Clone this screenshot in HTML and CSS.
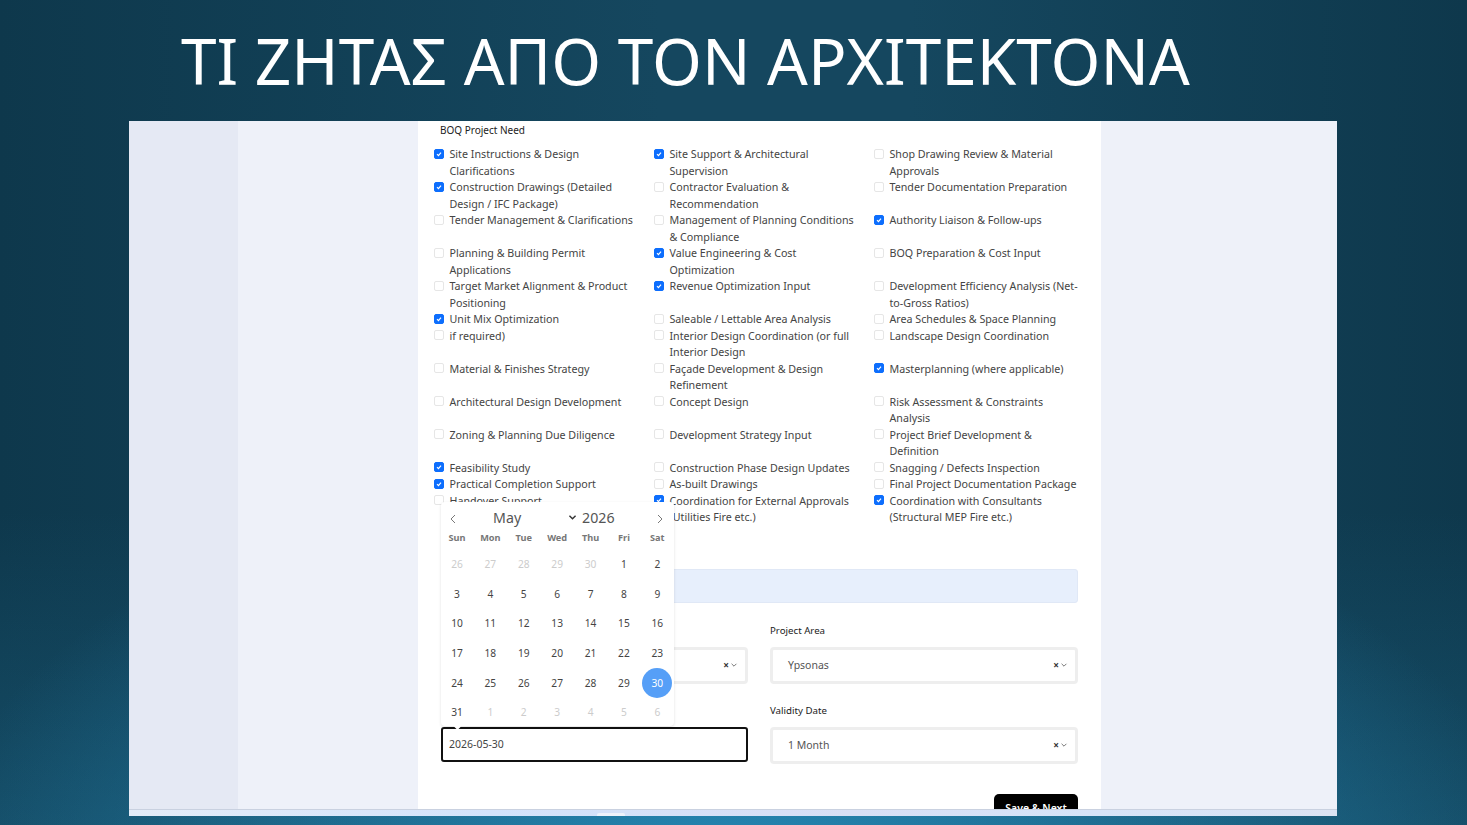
FILE: index.html
```html
<!DOCTYPE html>
<html lang="el">
<head>
<meta charset="utf-8">
<title>ΤΙ ΖΗΤΑΣ ΑΠΟ ΤΟΝ ΑΡΧΙΤΕΚΤΟΝΑ</title>
<link rel="stylesheet" href="styles.css">
</head>
<body>
<div class="slide">
  <h1 class="title">ΤΙ ΖΗΤΑΣ ΑΠΟ ΤΟΝ ΑΡΧΙΤΕΚΤΟΝΑ</h1>
  <div class="shot">
    <div class="app">
      <div class="sidebar"></div>
      <div class="gutter"></div>
      <main class="main">
        <div class="need-label">BOQ Project Need</div>
        <div class="checks">
          <label class="check"><span class="box on"><svg viewBox="0 0 10 10"><path d="M2.5 5.2 4.3 7l3.2-3.8"/></svg></span><span>Site Instructions &amp; Design Clarifications</span></label>
          <label class="check"><span class="box on"><svg viewBox="0 0 10 10"><path d="M2.5 5.2 4.3 7l3.2-3.8"/></svg></span><span>Site Support &amp; Architectural Supervision</span></label>
          <label class="check"><span class="box"></span><span>Shop Drawing Review &amp; Material Approvals</span></label>

          <label class="check"><span class="box on"><svg viewBox="0 0 10 10"><path d="M2.5 5.2 4.3 7l3.2-3.8"/></svg></span><span>Construction Drawings (Detailed Design / IFC Package)</span></label>
          <label class="check"><span class="box"></span><span>Contractor Evaluation &amp; Recommendation</span></label>
          <label class="check"><span class="box"></span><span>Tender Documentation Preparation</span></label>

          <label class="check"><span class="box"></span><span>Tender Management &amp; Clarifications</span></label>
          <label class="check"><span class="box"></span><span>Management of Planning Conditions &amp; Compliance</span></label>
          <label class="check"><span class="box on"><svg viewBox="0 0 10 10"><path d="M2.5 5.2 4.3 7l3.2-3.8"/></svg></span><span>Authority Liaison &amp; Follow-ups</span></label>

          <label class="check"><span class="box"></span><span>Planning &amp; Building Permit Applications</span></label>
          <label class="check"><span class="box on"><svg viewBox="0 0 10 10"><path d="M2.5 5.2 4.3 7l3.2-3.8"/></svg></span><span>Value Engineering &amp; Cost Optimization</span></label>
          <label class="check"><span class="box"></span><span>BOQ Preparation &amp; Cost Input</span></label>

          <label class="check"><span class="box"></span><span>Target Market Alignment &amp; Product Positioning</span></label>
          <label class="check"><span class="box on"><svg viewBox="0 0 10 10"><path d="M2.5 5.2 4.3 7l3.2-3.8"/></svg></span><span>Revenue Optimization Input</span></label>
          <label class="check"><span class="box"></span><span>Development Efficiency Analysis (Net-to-Gross Ratios)</span></label>

          <label class="check"><span class="box on"><svg viewBox="0 0 10 10"><path d="M2.5 5.2 4.3 7l3.2-3.8"/></svg></span><span>Unit Mix Optimization</span></label>
          <label class="check"><span class="box"></span><span>Saleable / Lettable Area Analysis</span></label>
          <label class="check"><span class="box"></span><span>Area Schedules &amp; Space Planning</span></label>

          <label class="check"><span class="box"></span><span>if required)</span></label>
          <label class="check"><span class="box"></span><span>Interior Design Coordination (or full Interior Design</span></label>
          <label class="check"><span class="box"></span><span>Landscape Design Coordination</span></label>

          <label class="check"><span class="box"></span><span>Material &amp; Finishes Strategy</span></label>
          <label class="check"><span class="box"></span><span>Façade Development &amp; Design Refinement</span></label>
          <label class="check"><span class="box on"><svg viewBox="0 0 10 10"><path d="M2.5 5.2 4.3 7l3.2-3.8"/></svg></span><span>Masterplanning (where applicable)</span></label>

          <label class="check"><span class="box"></span><span>Architectural Design Development</span></label>
          <label class="check"><span class="box"></span><span>Concept Design</span></label>
          <label class="check"><span class="box"></span><span>Risk Assessment &amp; Constraints Analysis</span></label>

          <label class="check"><span class="box"></span><span>Zoning &amp; Planning Due Diligence</span></label>
          <label class="check"><span class="box"></span><span>Development Strategy Input</span></label>
          <label class="check"><span class="box"></span><span>Project Brief Development &amp; Definition</span></label>

          <label class="check"><span class="box on"><svg viewBox="0 0 10 10"><path d="M2.5 5.2 4.3 7l3.2-3.8"/></svg></span><span>Feasibility Study</span></label>
          <label class="check"><span class="box"></span><span>Construction Phase Design Updates</span></label>
          <label class="check"><span class="box"></span><span>Snagging / Defects Inspection</span></label>

          <label class="check"><span class="box on"><svg viewBox="0 0 10 10"><path d="M2.5 5.2 4.3 7l3.2-3.8"/></svg></span><span>Practical Completion Support</span></label>
          <label class="check"><span class="box"></span><span>As-built Drawings</span></label>
          <label class="check"><span class="box"></span><span>Final Project Documentation Package</span></label>

          <label class="check"><span class="box"></span><span>Handover Support</span></label>
          <label class="check"><span class="box on"><svg viewBox="0 0 10 10"><path d="M2.5 5.2 4.3 7l3.2-3.8"/></svg></span><span>Coordination for External Approvals (Utilities Fire etc.)</span></label>
          <label class="check"><span class="box on"><svg viewBox="0 0 10 10"><path d="M2.5 5.2 4.3 7l3.2-3.8"/></svg></span><span>Coordination with Consultants (Structural MEP Fire etc.)</span></label>
        </div>
        <div class="info-bar"></div>
        <div class="form-grid">
          <div class="field">
            <div class="field-label"></div>
            <div class="select"><span></span><span class="select-icons"><span class="x">×</span><svg viewBox="0 0 10 10"><path d="M2 3.5 5 6.5 8 3.5"/></svg></span></div>
          </div>
          <div class="field">
            <div class="field-label">Project Area</div>
            <div class="select"><span>Ypsonas</span><span class="select-icons"><span class="x">×</span><svg viewBox="0 0 10 10"><path d="M2 3.5 5 6.5 8 3.5"/></svg></span></div>
          </div>
          <div class="field">
            <div class="field-label"></div>
            <div class="date-input">2026-05-30</div>
          </div>
          <div class="field">
            <div class="field-label">Validity Date</div>
            <div class="select"><span>1 Month</span><span class="select-icons"><span class="x">×</span><svg viewBox="0 0 10 10"><path d="M2 3.5 5 6.5 8 3.5"/></svg></span></div>
          </div>
        </div>
        <div class="actions"><button class="save">Save &amp; Next</button></div>

        <div class="calendar">
          <div class="cal-head">
            <svg class="cal-arrow" viewBox="0 0 10 14"><path d="M7.5 2 2.5 7l5 5"/></svg>
            <div class="cal-month"><span class="cal-m">May</span><svg class="cal-chev" viewBox="0 0 10 8"><path d="M1.5 2 5 5.5 8.5 2"/></svg><span class="cal-y">2026</span></div>
            <svg class="cal-arrow" viewBox="0 0 10 14"><path d="M2.5 2 7.5 7l-5 5"/></svg>
          </div>
          <div class="cal-week"><span>Sun</span><span>Mon</span><span>Tue</span><span>Wed</span><span>Thu</span><span>Fri</span><span>Sat</span></div>
          <div class="cal-days">
            <span class="off">26</span><span class="off">27</span><span class="off">28</span><span class="off">29</span><span class="off">30</span><span>1</span><span>2</span>
            <span>3</span><span>4</span><span>5</span><span>6</span><span>7</span><span>8</span><span>9</span>
            <span>10</span><span>11</span><span>12</span><span>13</span><span>14</span><span>15</span><span>16</span>
            <span>17</span><span>18</span><span>19</span><span>20</span><span>21</span><span>22</span><span>23</span>
            <span>24</span><span>25</span><span>26</span><span>27</span><span>28</span><span>29</span><span class="sel">30</span>
            <span>31</span><span class="off">1</span><span class="off">2</span><span class="off">3</span><span class="off">4</span><span class="off">5</span><span class="off">6</span>
          </div>
          <div class="cal-tip"></div>
        </div>
      </main>
      <div class="gutter-r"></div>
    </div>
    <div class="taskbar"><span class="task-tab"></span></div>
  </div>
</div>
</body>
</html>
```
FILE: styles.css
```css
* { box-sizing: border-box; }
html, body { margin: 0; height: 100%; }
body {
  font-family: "Noto Sans", "Open Sans", sans-serif;
  overflow: hidden;
}
.slide {
  width: 1467px;
  height: 825px;
  background:
    radial-gradient(ellipse 800px 420px at 50% 106%, #2587b4 0%, rgba(37, 135, 180, 0) 100%),
    linear-gradient(180deg, rgba(32, 110, 145, 0) 62%, rgba(32, 110, 145, .38) 100%),
    linear-gradient(90deg, #0e384c 0%, #15475f 45%, #15475f 62%, #0e384c 100%);
  overflow: hidden;
}
.title {
  margin: 0;
  height: 121px;
  padding: 17px 0 0 181px;
  font-size: 63.9px;
  line-height: 88px;
  font-weight: 400;
  color: #fff;
  white-space: nowrap;
}
.shot {
  width: 1208px;
  height: 695px;
  margin-left: 129px;
  display: flex;
  flex-direction: column;
}
.app { display: flex; height: 688px; overflow: hidden; }
.sidebar { width: 109px; background: #e5e9f4; }
.gutter { width: 180px; background: #eef1f9; }
.gutter-r { width: 236px; background: #eef1f9; }
.main {
  position: relative;
  width: 683px;
  background: #fff;
  padding: 0 23px 0 16px;
  color: #3a3a3a;
  font-size: 11px;
}
.need-label {
  height: 25.4px;
  padding: 1px 0 0 6px;
  font-size: 10px;
  line-height: 16px;
  color: #222;
}
.checks {
  display: grid;
  grid-template-columns: repeat(3, 220px);
  margin-right: -20px;
}
.check {
  display: flex;
  gap: 5.5px;
  padding-right: 15px;
  font-size: 10.7px;
  line-height: 16.48px;
  color: #444;
}
.box {
  flex: none;
  width: 10px;
  height: 10px;
  margin-top: 2.5px;
  border: 1px solid #e6e6e6;
  border-radius: 2px;
  background: #fff;
}
.box svg { display: block; width: 8px; height: 8px; fill: none; stroke: #fff; stroke-width: 1.5; }
.box.on { background: #0d6efd; border-color: #0d6efd; }
.info-bar {
  height: 34px;
  margin: 43.2px 0 0 7px;
  background: #e7effc;
  border: 1px solid #e0e8f6;
  border-radius: 3px;
}
.form-grid {
  display: grid;
  grid-template-columns: 307px 308px;
  column-gap: 22px;
  row-gap: 0;
  margin: 20px 0 0 7px;
}
.field { height: 80px; }
.field-label {
  height: 24px;
  font-size: 9.7px;
  line-height: 16px;
  color: #222;
}
.select {
  display: flex;
  justify-content: space-between;
  align-items: center;
  height: 37px;
  padding: 0 7px 0 15px;
  border: 3px solid #eee;
  border-radius: 4px;
  font-size: 10.5px;
  color: #555;
}
.select-icons { display: flex; align-items: center; gap: 1px; color: #333; }
.select-icons .x { font-size: 10px; line-height: 10px; font-weight: 700; }
.select-icons svg { width: 8px; height: 8px; fill: none; stroke: #555; stroke-width: 1; }
.date-input {
  height: 35px;
  padding-left: 6px;
  border: 2px solid #111;
  border-radius: 3px;
  font-size: 10.5px;
  line-height: 31px;
  color: #444;
}
.actions { display: flex; justify-content: flex-end; margin-top: 11px; }
.save {
  width: 84px;
  height: 30px;
  padding: 0;
  border: 0;
  border-radius: 5px;
  background: #000;
  color: #fff;
  font: 600 10.5px/27px "Noto Sans", sans-serif;
}
.calendar {
  position: absolute;
  left: 22.6px;
  top: 381px;
  width: 233px;
  height: 224px;
  background: #fff;
  border-radius: 4px;
  box-shadow: 0 1px 3px rgba(0, 0, 0, .12);
}
.cal-head {
  display: flex;
  align-items: center;
  justify-content: space-between;
  height: 30px;
  padding: 0 10px 0 8px;
}
.cal-arrow { width: 8px; height: 12px; margin-top: 4px; fill: none; stroke: #555; stroke-width: 1; }
.cal-month { display: flex; align-items: center; font-size: 14.2px; color: #555; width: 126px; }
.cal-m { width: 75px; }
.cal-chev { width: 9px; height: 7px; fill: none; stroke: #333; stroke-width: 1.6; margin-right: 5px; }
.cal-week {
  display: grid;
  grid-template-columns: repeat(7, 33.4px);
  height: 17px;
  margin-left: -.3px;
  text-align: center;
  font-size: 9.2px;
  line-height: 11px;
  font-weight: 700;
  color: #777;
}
.cal-days {
  display: grid;
  grid-template-columns: repeat(7, 33.4px);
  grid-auto-rows: 29.7px;
  margin: 1px 0 0 -.3px;
  text-align: center;
  font-size: 10.2px;
  line-height: 29.7px;
  color: #444;
}
.cal-days .off { color: #ccc; }
.cal-days .sel {
  width: 30px;
  height: 30px;
  margin: -1px 0 0 1.7px;
  border-radius: 50%;
  background: #569ff7;
  color: #fff;
  line-height: 31px;
}
.cal-tip {
  position: absolute;
  left: 14px;
  bottom: -3px;
  width: 5px;
  height: 5px;
  background: #fff;
  transform: rotate(45deg);
}
.taskbar {
  position: relative;
  height: 7px;
  border-top: 1px solid #c9d1e0;
  background: linear-gradient(90deg, #e3ecf8, #d3e3fb 30%, #d8dff5 60%, #d6e4f8 80%, #dbe3f3);
}
.task-tab {
  position: absolute;
  left: 468px;
  bottom: 0;
  width: 28px;
  height: 3px;
  background: #eef2fb;
  border-radius: 2px 2px 0 0;
}
```
